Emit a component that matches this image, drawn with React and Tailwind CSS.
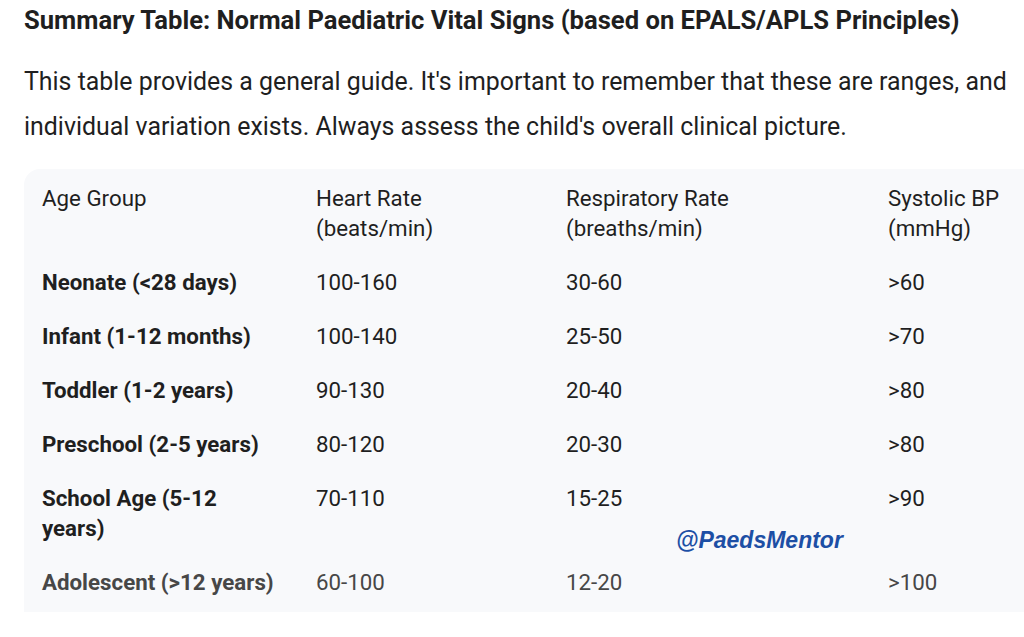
import React from "react";

const rows = [
  [["Neonate (<28 days)"], "100-160", "30-60", ">60"],
  [["Infant (1-12 months)"], "100-140", "25-50", ">70"],
  [["Toddler (1-2 years)"], "90-130", "20-40", ">80"],
  [["Preschool (2-5 years)"], "80-120", "20-30", ">80"],
  [["School Age (5-12", "years)"], "70-110", "15-25", ">90"],
  [["Adolescent (>12 years)"], "60-100", "12-20", ">100"],
];

export default function App() {
  return (
    <div
      className="w-[1024px] h-[637px] overflow-hidden bg-white text-[#1f1f1f]"
      style={{ fontFamily: "Roboto, 'Noto Sans', sans-serif" }}
    >
      <div className="pl-[24px] pt-[4px]">
        <h3 className="text-[25.6px] leading-[32px] font-bold whitespace-nowrap">
          Summary Table: Normal Paediatric Vital Signs (based on EPALS/APLS Principles)
        </h3>
        <p className="mt-[23px] text-[24.9px] leading-[45px] whitespace-nowrap">
          This table provides a general guide. It's important to remember that these are ranges, and
          <br />
          individual variation exists. Always assess the child's overall clinical picture.
        </p>
      </div>
      <div className="relative mt-[20px] ml-[24px] rounded-tl-[16px] bg-[#f8f9fb] pt-[14px] pb-[3px] text-[22.3px] leading-[30px]">
        <div className="grid grid-cols-[274px_250px_322px_1fr]">
          <div className="pl-[18px] pb-[12px]">Age Group</div>
          <div className="pl-[18px] pb-[12px]">Heart Rate<br />(beats/min)</div>
          <div className="pl-[18px] pb-[12px]">Respiratory Rate<br />(breaths/min)</div>
          <div className="pl-[18px] pb-[12px]">Systolic BP<br />(mmHg)</div>
          {rows.map((r, i) => {
            const faded = i === rows.length - 1;
            const c = faded ? "text-[#474747]" : "text-[#1f1f1f]";
            return (
              <React.Fragment key={i}>
                <div className={`pl-[18px] py-[12px] font-bold whitespace-nowrap ${c}`}>
                  {r[0].map((t, j) => (
                    <div key={j}>{t}</div>
                  ))}
                </div>
                <div className={`pl-[18px] py-[12px] ${c}`}>{r[1]}</div>
                <div className={`pl-[18px] py-[12px] ${c}`}>{r[2]}</div>
                <div className={`pl-[18px] py-[12px] ${c}`}>{r[3]}</div>
              </React.Fragment>
            );
          })}
        </div>
        <div
          className="absolute left-[652px] top-[356px] text-[23px] leading-[30px] font-bold italic text-[#1d4fa5]"
          style={{ fontFamily: "'Liberation Sans', Arial, sans-serif" }}
        >
          @PaedsMentor
        </div>
      </div>
    </div>
  );
}
